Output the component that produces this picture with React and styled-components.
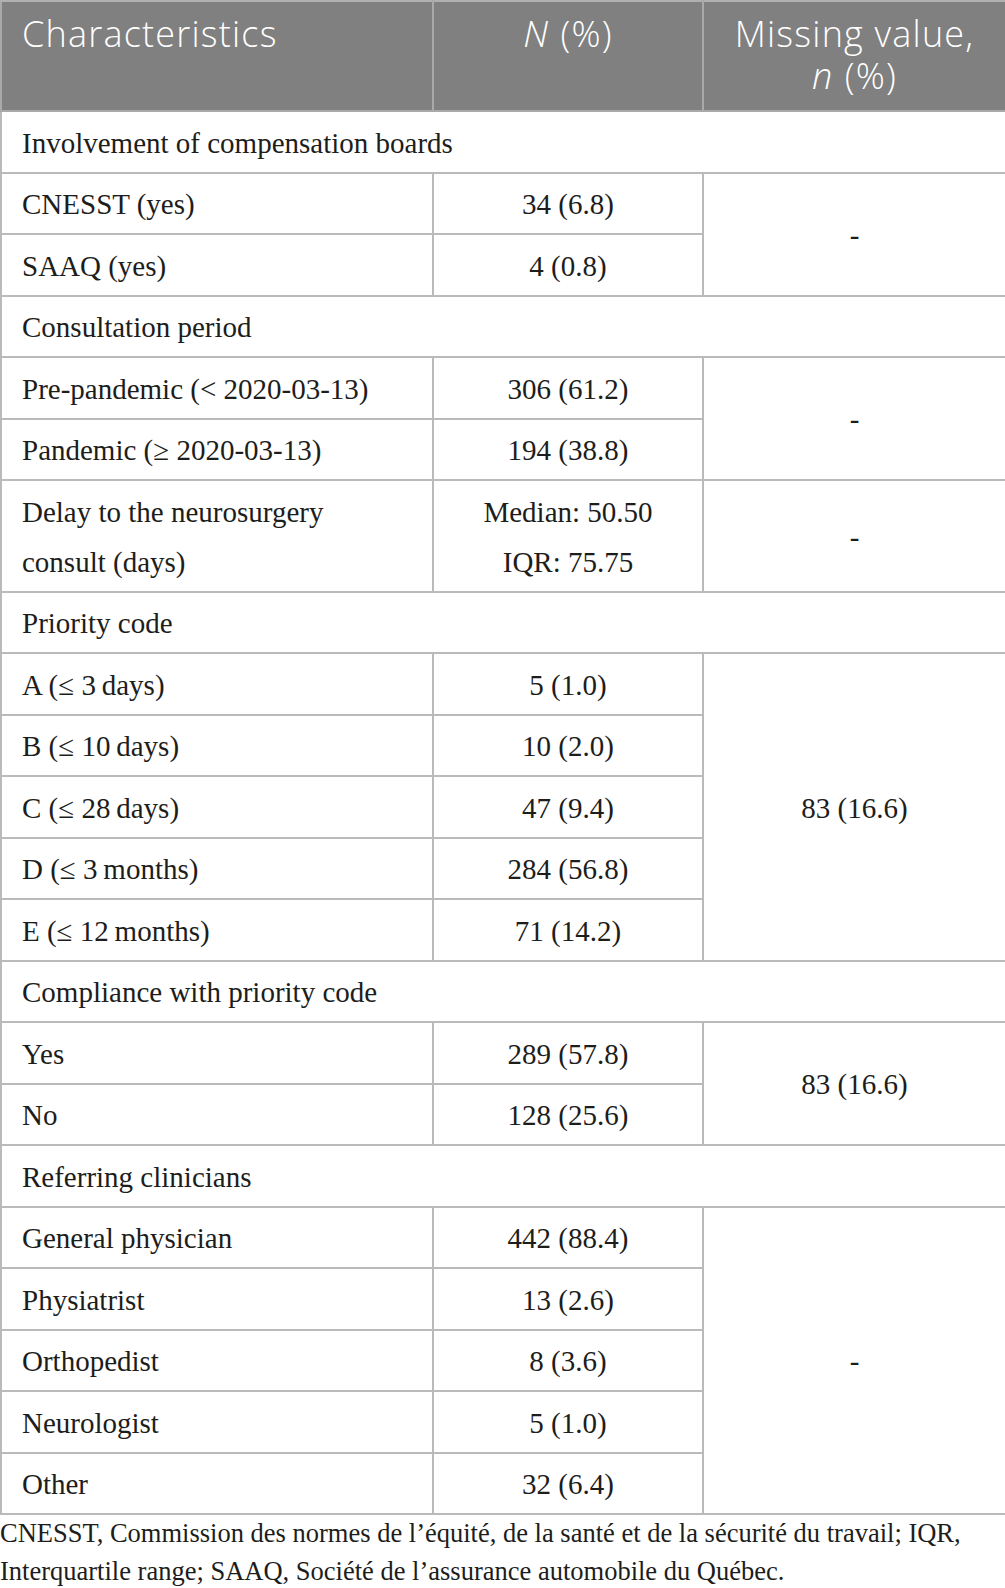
import React from "react";
import styled, { createGlobalStyle } from "styled-components";

const GlobalStyle = createGlobalStyle`
  html, body {
    margin: 0;
    padding: 0;
    background: #ffffff;
  }
  body {
    font-family: "Liberation Serif", "Times New Roman", serif;
    color: #1d1d1b;
  }
`;

const Figure = styled.div`
  width: 1005px;
`;

const Table = styled.table`
  width: 1005px;
  border-collapse: collapse;
  table-layout: fixed;
`;

const Col = styled.col`
  width: ${(p) => p.$w}px;
`;

const HeadCell = styled.th`
  background: #808080;
  color: #ffffff;
  font-family: "Open Sans", "Noto Sans", sans-serif;
  font-weight: 300;
  font-size: 36px;
  letter-spacing: 1.2px;
  line-height: 42px;
  text-align: ${(p) => p.$align || "left"};
  vertical-align: top;
  padding: 11px 20px 13px 20px;
  border: 2px solid #a9a9a9;
  border-top-color: #b0b0b0;
  white-space: nowrap;
`;

const Em = styled.i`
  font-style: italic;
  letter-spacing: 0;
  margin-right: 2px;
`;

const Cell = styled.td`
  font-family: "Liberation Serif", "Times New Roman", serif;
  font-size: 29px;
  line-height: 50px;
  color: #1d1d1b;
  text-align: ${(p) => p.$align || "left"};
  vertical-align: ${(p) => (p.$middle ? "middle" : "top")};
  padding: 5.5px 20px 4px 20px;
  border: 2px solid #bababa;
  white-space: nowrap;
`;

const Footnote = styled.p`
  margin: 0;
  font-family: "Liberation Serif", "Times New Roman", serif;
  font-size: 26.5px;
  line-height: 37.5px;
  color: #1d1d1b;
  white-space: nowrap;
`;

const sections = [
  {
    title: "Involvement of compensation boards",
    rows: [
      { label: ["CNESST (yes)"], value: ["34 (6.8)"] },
      { label: ["SAAQ (yes)"], value: ["4 (0.8)"] },
    ],
    missing: [{ span: 2, text: "-" }],
  },
  {
    title: "Consultation period",
    rows: [
      { label: ["Pre-pandemic (< 2020-03-13)"], value: ["306 (61.2)"] },
      { label: ["Pandemic (≥ 2020-03-13)"], value: ["194 (38.8)"] },
      {
        label: ["Delay to the neurosurgery", "consult (days)"],
        value: ["Median: 50.50", "IQR: 75.75"],
      },
    ],
    missing: [
      { span: 2, text: "-" },
      { span: 1, text: "-" },
    ],
  },
  {
    title: "Priority code",
    rows: [
      { label: ["A (≤ 3\u2009days)"], value: ["5 (1.0)"] },
      { label: ["B (≤ 10\u2009days)"], value: ["10 (2.0)"] },
      { label: ["C (≤ 28\u2009days)"], value: ["47 (9.4)"] },
      { label: ["D (≤ 3\u2009months)"], value: ["284 (56.8)"] },
      { label: ["E (≤ 12\u2009months)"], value: ["71 (14.2)"] },
    ],
    missing: [{ span: 5, text: "83 (16.6)" }],
  },
  {
    title: "Compliance with priority code",
    rows: [
      { label: ["Yes"], value: ["289 (57.8)"] },
      { label: ["No"], value: ["128 (25.6)"] },
    ],
    missing: [{ span: 2, text: "83 (16.6)" }],
  },
  {
    title: "Referring clinicians",
    rows: [
      { label: ["General physician"], value: ["442 (88.4)"] },
      { label: ["Physiatrist"], value: ["13 (2.6)"] },
      { label: ["Orthopedist"], value: ["8 (3.6)"] },
      { label: ["Neurologist"], value: ["5 (1.0)"] },
      { label: ["Other"], value: ["32 (6.4)"] },
    ],
    missing: [{ span: 5, text: "-" }],
  },
];

function Lines({ lines }) {
  return lines.map((line, i) => (
    <React.Fragment key={i}>
      {i > 0 && <br />}
      {line}
    </React.Fragment>
  ));
}

function Section({ section }) {
  const starts = {};
  let idx = 0;
  section.missing.forEach((m) => {
    starts[idx] = m;
    idx += m.span;
  });
  return (
    <>
      <tr>
        <Cell colSpan={3}>{section.title}</Cell>
      </tr>
      {section.rows.map((row, i) => (
        <tr key={i}>
          <Cell>
            <Lines lines={row.label} />
          </Cell>
          <Cell $align="center">
            <Lines lines={row.value} />
          </Cell>
          {starts[i] && (
            <Cell $align="center" $middle rowSpan={starts[i].span}>
              {starts[i].text}
            </Cell>
          )}
        </tr>
      ))}
    </>
  );
}

export default function App() {
  return (
    <Figure>
      <GlobalStyle />
      <Table>
        <colgroup>
          <Col $w={432} />
          <Col $w={270} />
          <Col $w={303} />
        </colgroup>
        <thead>
          <tr>
            <HeadCell>Characteristics</HeadCell>
            <HeadCell $align="center">
              <Em>N</Em> (%)
            </HeadCell>
            <HeadCell $align="center">
              Missing value,
              <br />
              <Em>n</Em> (%)
            </HeadCell>
          </tr>
        </thead>
        <tbody>
          {sections.map((s, i) => (
            <Section key={i} section={s} />
          ))}
        </tbody>
      </Table>
      <Footnote>
        CNESST, Commission des normes de l’équité, de la santé et de la sécurité du travail; IQR,
        <br />
        Interquartile range; SAAQ, Société de l’assurance automobile du Québec.
      </Footnote>
    </Figure>
  );
}
